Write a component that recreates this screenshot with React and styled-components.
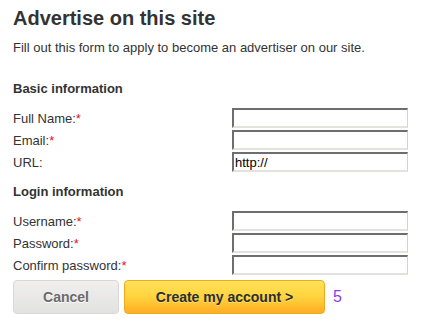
import React from "react";
import styled, { createGlobalStyle } from "styled-components";

const GlobalStyle = createGlobalStyle`
  body {
    margin: 0;
    background: #fff;
    font-family: "Liberation Sans", Arial, sans-serif;
    color: #333;
  }
`;

const basicFields = [
  { label: "Full Name:", required: true },
  { label: "Email:", required: true },
  { label: "URL:", value: "http://" },
];

const loginFields = [
  { label: "Username:", required: true },
  { label: "Password:", required: true, type: "password" },
  { label: "Confirm password:", required: true, type: "password" },
];

function FieldRows({ fields }) {
  return (
    <Rows>
      {fields.map((f) => (
        <Row key={f.label}>
          <Label>
            {f.label}
            {f.required && <Star>*</Star>}
          </Label>
          <Input type={f.type || "text"} defaultValue={f.value || ""} />
        </Row>
      ))}
    </Rows>
  );
}

export default function App() {
  return (
    <Page>
      <GlobalStyle />
      <Title>Advertise on this site</Title>
      <Intro>Fill out this form to apply to become an advertiser on our site.</Intro>

      <Section>Basic information</Section>
      <FieldRows fields={basicFields} />

      <Section>Login information</Section>
      <FieldRows fields={loginFields} />

      <Actions>
        <CancelButton type="button">Cancel</CancelButton>
        <CreateButton type="button">Create my account &gt;</CreateButton>
        <Step>5</Step>
      </Actions>
    </Page>
  );
}

// --- Styled Components ---

const Page = styled.div`
  padding: 6px 13px 0;
  font-size: 13px;
`;

const Title = styled.h1`
  margin: 0;
  font-size: 20px;
  line-height: 24px;
  font-weight: 700;
  color: #333;
`;

const Intro = styled.p`
  margin: 10px 0 0;
  font-size: 13px;
  line-height: 16px;
`;

const Section = styled.h2`
  margin: 25px 0 11px;
  font-size: 13px;
  line-height: 16px;
  font-weight: 700;
  color: #333;

  & + * + & {
    margin-top: 12px;
  }
`;

const Rows = styled.div`
  display: flex;
  flex-direction: column;
  gap: 2px;
`;

const Row = styled.div`
  display: grid;
  grid-template-columns: 219px 176px;
  align-items: center;
  height: 20px;
`;

const Label = styled.label`
  line-height: 16px;
  margin-top: 1px;
`;

const Star = styled.span`
  color: #e8102a;
`;

const Input = styled.input`
  box-sizing: border-box;
  width: 176px;
  height: 20px;
  margin: 0;
  padding: 0 1px;
  border-style: solid;
  border-width: 2px 1px 2px 2px;
  border-color: #6e6e6e #d6d3cc #e4e2dc #6e6e6e;
  background: #fff;
  font-family: "Liberation Sans", Arial, sans-serif;
  font-size: 13px;
  color: #000;
  outline: none;
`;

const Actions = styled.div`
  display: flex;
  align-items: center;
  gap: 5px;
  margin-top: 5px;
`;

const BaseButton = styled.button`
  box-sizing: border-box;
  height: 34px;
  margin: 0;
  padding: 0;
  border-radius: 4px;
  font-family: "Liberation Sans", Arial, sans-serif;
  font-size: 14px;
  font-weight: 700;
  cursor: pointer;
`;

const CancelButton = styled(BaseButton)`
  width: 106px;
  border: 1px solid #d8d8d6;
  background: linear-gradient(#f0efed, #e2e2e0);
  color: #6a6a6a;
  text-shadow: 0 1px 0 #fff;
`;

const CreateButton = styled(BaseButton)`
  width: 201px;
  border: 1px solid #f2a81c;
  background: linear-gradient(#ffe25a, #ffd33e 50%, #ffae24);
  color: #2e2e2e;
  text-shadow: 0 1px 0 rgba(255, 240, 160, 0.6);
`;

const Step = styled.span`
  margin-left: 3px;
  font-size: 16px;
  color: #8a3cf0;
`;
